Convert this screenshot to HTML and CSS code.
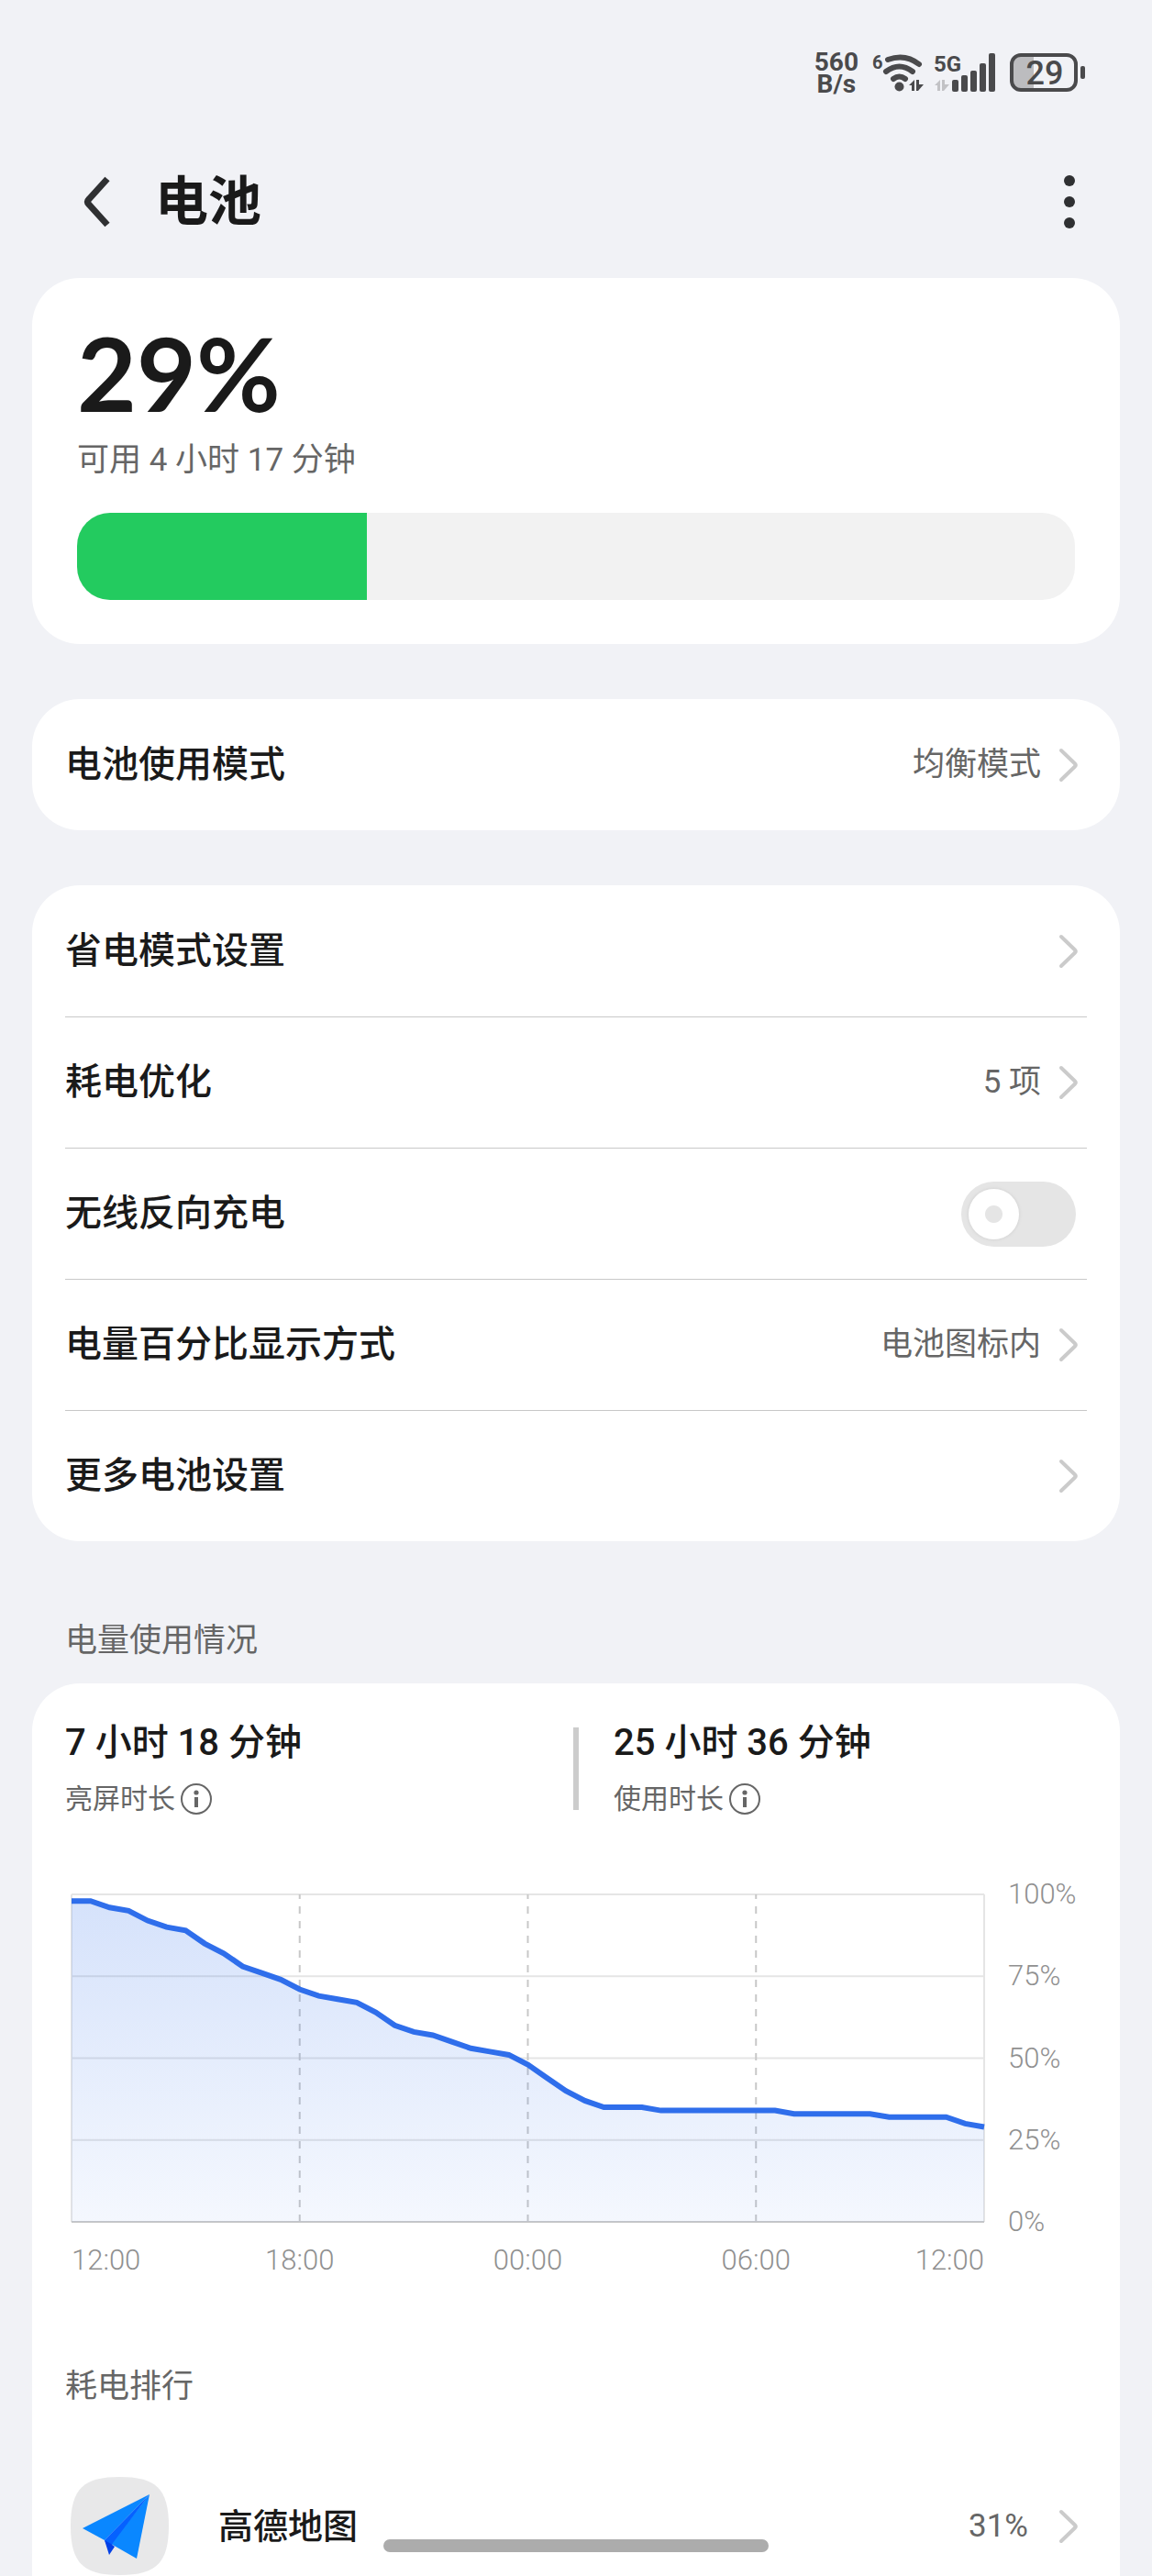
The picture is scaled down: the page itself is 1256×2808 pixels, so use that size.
FILE: index.html
```html
<!DOCTYPE html>
<html lang="zh-CN">

<head>
    <meta charset="UTF-8">
    <meta name="viewport" content="width=device-width, initial-scale=1.0">
    <title>电池</title>
    <link rel="stylesheet" href="styles.css">
</head>

<body>
    <!-- shared icons -->
    <svg class="sprite" aria-hidden="true">
        <symbol id="chevron" viewBox="0 0 24 40">
            <path d="M4 4 19 18.500Q20.500 20 19 21.500L4 36" fill="none" stroke="#cbcbcb" stroke-width="4" stroke-linecap="round" />
        </symbol>
        <symbol id="info" viewBox="0 0 36 36">
            <circle cx="18" cy="18" r="16" fill="none" stroke="#666" stroke-width="2" />
            <circle cx="18" cy="11" r="2.600" fill="#666" />
            <path d="M18 16v11" stroke="#666" stroke-width="4" />
        </symbol>
    </svg>

    <div class="status-bar">
        <div class="net-speed">560<br>B/s</div>
        <svg class="status-icon" width="62" height="48" viewBox="0 0 62 48">
            <text x="5" y="19" font-size="20" font-weight="700">6</text>
            <g fill="none" stroke="#4a4a4c" stroke-width="6" stroke-linecap="round">
                <path d="M22 9Q41 2 56 14" />
                <path d="M20 22Q34.500 11 49 22" />
                <path d="M28 30Q34.500 25 41 30" />
            </g>
            <circle cx="34.500" cy="38.500" r="5" />
            <path d="M45 37 51 31v12h-3v-6zM53 31h3v5h5l-6 7h-2z" />
        </svg>
        <svg class="status-icon" width="70" height="48" viewBox="0 0 70 48">
            <text x="0" y="22" font-size="24" font-weight="700">5G</text>
            <path d="M1 37 7 31v12H4v-6zM9 31h3v5h5l-6 7H9z" fill="#c2c2c5" />
            <rect x="20" y="31" width="7" height="13" rx="2" />
            <rect x="30" y="26" width="7" height="18" rx="2" />
            <rect x="40" y="21" width="7" height="23" rx="2" />
            <rect x="50" y="13" width="7" height="31" rx="2" />
            <rect x="60" y="2" width="7" height="42" rx="2" />
        </svg>
        <svg class="status-icon" width="86" height="48" viewBox="0 0 86 48">
            <path d="M14 5H29V41H14Q7 41 7 33V13Q7 5 14 5z" fill="#bcbcbf" />
            <rect x="5" y="4" width="70" height="38" rx="10" fill="none" stroke="#4a4a4c" stroke-width="4" />
            <rect x="80" y="16" width="5" height="14" rx="2" />
            <text x="41" y="36" font-size="36" font-weight="500" text-anchor="middle">29</text>
        </svg>
    </div>

    <header class="header">
        <button class="icon-button" aria-label="返回">
            <svg width="56" height="56" viewBox="0 0 56 56">
                <path d="M36 3 16 25Q13 28 16 31L36 53" fill="none" stroke="#2f3032" stroke-width="7" />
            </svg>
        </button>
        <h1>电池</h1>
        <button class="icon-button" aria-label="更多">
            <svg width="56" height="64" viewBox="0 0 56 64" fill="#2f3032">
                <circle cx="28" cy="9" r="6" />
                <circle cx="28" cy="32" r="6" />
                <circle cx="28" cy="55" r="6" />
            </svg>
        </button>
    </header>

    <main>
        <section class="card level">
            <div class="level-value">29%</div>
            <div class="level-time">可用 4 小时 17 分钟</div>
            <div class="level-bar">
                <div class="level-fill" style="width: 29%"></div>
            </div>
        </section>

        <section class="card">
            <a class="row" href="#">
                <span class="row-label">电池使用模式</span>
                <span class="row-value">均衡模式</span>
                <svg class="chevron"><use href="#chevron" /></svg>
            </a>
        </section>

        <section class="card">
            <a class="row" href="#">
                <span class="row-label">省电模式设置</span>
                <svg class="chevron"><use href="#chevron" /></svg>
            </a>
            <a class="row" href="#">
                <span class="row-label">耗电优化</span>
                <span class="row-value">5 项</span>
                <svg class="chevron"><use href="#chevron" /></svg>
            </a>
            <label class="row">
                <span class="row-label">无线反向充电</span>
                <input class="switch" type="checkbox">
            </label>
            <a class="row" href="#">
                <span class="row-label">电量百分比显示方式</span>
                <span class="row-value">电池图标内</span>
                <svg class="chevron"><use href="#chevron" /></svg>
            </a>
            <a class="row" href="#">
                <span class="row-label">更多电池设置</span>
                <svg class="chevron"><use href="#chevron" /></svg>
            </a>
        </section>

        <h2 class="section-title">电量使用情况</h2>

        <section class="card usage">
            <div class="stats">
                <div class="stat">
                    <div class="stat-value">7 小时 18 分钟</div>
                    <div class="stat-label">亮屏时长<svg class="info"><use href="#info" /></svg></div>
                </div>
                <div class="stats-divider"></div>
                <div class="stat">
                    <div class="stat-value">25 小时 36 分钟</div>
                    <div class="stat-label">使用时长<svg class="info"><use href="#info" /></svg></div>
                </div>
            </div>

            <div class="chart">
                <!-- x: half hours, y: 100 minus the battery level -->
                <svg class="plot" viewBox="0 0 48 100" preserveAspectRatio="none">
                    <defs>
                        <linearGradient id="area" x1="0" y1="0" x2="0" y2="1">
                            <stop offset="0" stop-color="#2f6eeb" stop-opacity="0.200" />
                            <stop offset="1" stop-color="#2f6eeb" stop-opacity="0.050" />
                        </linearGradient>
                    </defs>
                    <path class="grid-line" d="M0 0H48M0 25H48M0 50H48M0 75H48M0 0V100M48 0V100" />
                    <path class="grid-dash" d="M12 0V100M24 0V100M36 0V100" />
                    <path class="grid-base" d="M0 100H48" />
                    <polygon fill="url(#area)" points="0,100 0,2 1,2 2,4 3,5 4,8 5,10 6,11 7,15 8,18 9,22 10,24 11,26 12,29 13,31 14,32 15,33 16,36 17,40 18,42 19,43 20,45 21,47 22,48 23,49 24,52 25,56 26,60 27,63 28,65 30,65 31,66 37,66 38,67 42,67 43,68 46,68 47,70 48,71 48,100" />
                    <polyline class="line" points="0,2 1,2 2,4 3,5 4,8 5,10 6,11 7,15 8,18 9,22 10,24 11,26 12,29 13,31 14,32 15,33 16,36 17,40 18,42 19,43 20,45 21,47 22,48 23,49 24,52 25,56 26,60 27,63 28,65 30,65 31,66 37,66 38,67 42,67 43,68 46,68 47,70 48,71" />
                </svg>
                <div class="y-axis">
                    <span>100%</span>
                    <span>75%</span>
                    <span>50%</span>
                    <span>25%</span>
                    <span>0%</span>
                </div>
                <div class="x-axis">
                    <span>12:00</span>
                    <span>18:00</span>
                    <span>00:00</span>
                    <span>06:00</span>
                    <span>12:00</span>
                </div>
            </div>

            <h3 class="rank-title">耗电排行</h3>
            <a class="app" href="#">
                <svg class="app-icon" viewBox="0 0 107 107">
                    <path d="M53.500 0C92 0 107 12 107 53.500S92 107 53.500 107 0 95 0 53.500 15 0 53.500 0z" fill="#e8e8e9" />
                    <path d="M86 19 13 56 37 69z" fill="#0a87ff" />
                    <path d="M86 19 44 73 72 89z" fill="#0a87ff" />
                    <path d="M86 19 37 69 42 80 46 72z" fill="#0561ff" />
                    <path d="M37 69 42 85 48 76 44 73z" fill="#0340e6" />
                </svg>
                <span class="app-name">高德地图</span>
                <span class="app-value">31%</span>
                <svg class="chevron"><use href="#chevron" /></svg>
            </a>
        </section>
    </main>

    <div class="home-indicator"></div>
</body>

</html>
```

FILE: styles.css
```css
* {
    box-sizing: border-box;
}

body {
    margin: 0;
    min-height: 100vh;
    display: flex;
    flex-direction: column;
    background-color: #f1f2f6;
    color: #1a1a1a;
    font-family: Roboto, "Noto Sans CJK SC", sans-serif;
}

h1,
h2,
h3 {
    margin: 0;
}

a {
    color: inherit;
    text-decoration: none;
}

.sprite {
    display: none;
}

/* status bar */
.status-bar {
    display: flex;
    justify-content: flex-end;
    gap: 10px;
    padding: 56px 72px 0;
    color: #4a4a4c;
}

.status-icon {
    fill: #4a4a4c;
}

.net-speed {
    font-size: 28px;
    font-weight: 700;
    line-height: 24px;
    text-align: center;
}

/* title */
.header {
    display: flex;
    align-items: center;
    padding: 76px 62px 43px 81px;
}

.header h1 {
    flex: 1;
    margin-left: 32px;
    font-size: 58px;
    font-weight: 700;
    line-height: 80px;
}

.icon-button {
    display: flex;
    padding: 0;
    border: 0;
    background: none;
}

/* cards */
main {
    flex: 1;
    display: flex;
    flex-direction: column;
    padding: 0 35px;
}

.card {
    margin-bottom: 60px;
    padding: 0 36px;
    border-radius: 52px;
    background-color: white;
}

.level {
    padding: 48px 49px;
}

.level-value {
    font-family: Lato, sans-serif;
    font-size: 112px;
    font-weight: 700;
    line-height: 110px;
}

.level-time {
    margin: 16px 0 32px;
    color: #666;
    font-size: 35px;
    line-height: 50px;
}

.level-bar {
    height: 95px;
    border-radius: 36px;
    background-color: #f2f2f2;
    overflow: hidden;
}

.level-fill {
    height: 100%;
    background-color: #23cb5f;
}

.row {
    display: flex;
    align-items: center;
    height: 143px;
    padding-right: 8px;
    line-height: 52px;
}

.row + .row {
    border-top: 1px solid #c8c8c8;
}

.row-label {
    flex: 1;
    font-size: 40px;
    font-weight: 500;
}

.row-value {
    margin-right: 18px;
    color: #666;
    font-size: 35px;
}

.chevron {
    width: 24px;
    height: 40px;
}

.switch {
    display: flex;
    align-items: center;
    width: 125px;
    height: 71px;
    margin: 0 4px 0 0;
    padding: 0 8px;
    border-radius: 36px;
    background-color: #e5e5e5;
    appearance: none;
}

.switch::before {
    content: "";
    width: 55px;
    height: 55px;
    border-radius: 50%;
    background: radial-gradient(circle, #e5e5e5 9px, white 10px);
    box-shadow: 0 0 3px 1px #d6d6d6;
}

.switch:checked {
    justify-content: flex-end;
    background-color: #2f6eeb;
}

.section-title,
.rank-title {
    color: #666;
    font-size: 35px;
    font-weight: 400;
    line-height: 50px;
}

.section-title {
    margin: 24px 36px 21px;
}

/* usage */
.usage {
    flex: 1;
    margin-bottom: 0;
    padding-top: 39px;
    border-bottom-left-radius: 0;
    border-bottom-right-radius: 0;
}

.stats {
    display: grid;
    grid-template-columns: 1fr 6px 1fr;
    column-gap: 38px;
    align-items: center;
}

.stats-divider {
    height: 90px;
    background-color: #ccc;
}

.stat-value {
    font-size: 40px;
    font-weight: 500;
    line-height: 52px;
}

.stat-label {
    display: flex;
    align-items: center;
    gap: 5px;
    margin-top: 15px;
    color: #666;
    font-size: 30px;
    line-height: 40px;
}

.info {
    width: 36px;
    height: 36px;
}

.chart {
    display: grid;
    grid-template-columns: 1fr 86px;
    column-gap: 26px;
    margin: 84px 0 96px 7px;
    color: #909090;
    font-size: 31px;
    font-weight: 300;
    line-height: 34px;
}

.plot {
    width: 100%;
    height: 357px;
    overflow: visible;
}

.plot path,
.plot polyline {
    fill: none;
    vector-effect: non-scaling-stroke;
}

.grid-line {
    stroke: #e5e5e5;
    stroke-width: 2;
}

.grid-dash {
    stroke: #c8c8c8;
    stroke-width: 2;
    stroke-dasharray: 8 8;
    stroke-dashoffset: 3;
}

.grid-base {
    stroke: #c8c8c8;
    stroke-width: 2;
}

.line {
    stroke: #2f6eeb;
    stroke-width: 6;
}

.y-axis {
    display: flex;
    flex-direction: column;
    justify-content: space-between;
    margin: -17px 0;
}

.x-axis {
    display: grid;
    grid-template-columns: 1fr 2fr 2fr 2fr 1fr;
    margin-top: 25px;
    text-align: center;
}

.x-axis span:first-child {
    text-align: left;
}

.x-axis span:last-child {
    text-align: right;
}

.app {
    display: flex;
    align-items: center;
    margin-top: 73px;
    padding: 0 8px 0 6px;
    line-height: 52px;
}

.app-icon {
    width: 107px;
    height: 107px;
}

.app-name {
    flex: 1;
    margin-left: 54px;
    font-size: 38px;
    font-weight: 500;
}

.app-value {
    margin-right: 32px;
    color: #666;
    font-size: 35px;
}

.home-indicator {
    position: fixed;
    bottom: 26px;
    left: 50%;
    width: 420px;
    height: 14px;
    margin-left: -210px;
    border-radius: 7px;
    background-color: #acacac;
}
```
